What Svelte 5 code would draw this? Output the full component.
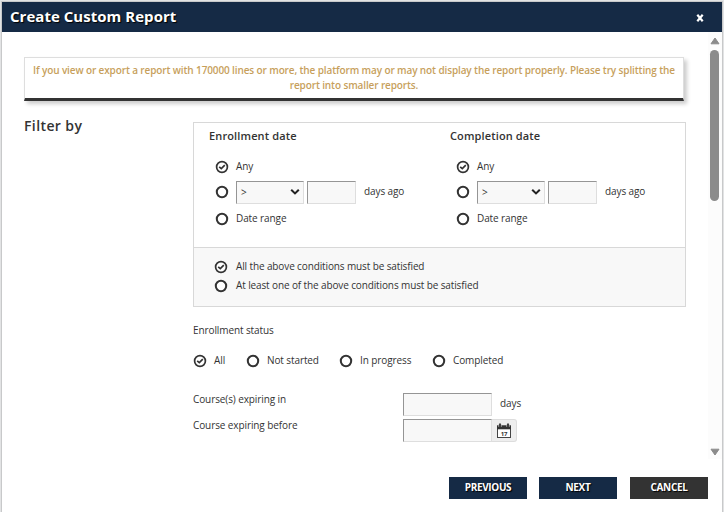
<script>
  const groups = ['Enrollment date', 'Completion date'];
  const statuses = [
    { label: 'All', width: 53 },
    { label: 'Not started', width: 93 },
    { label: 'In progress', width: 93 },
    { label: 'Completed', width: 80 }
  ];
</script>

{#snippet radio(checked)}
  <svg class="radio" width="14" height="14" viewBox="0 0 14 14">
    <circle cx="7" cy="7" r={checked ? 5.4 : 5.2} fill="#fff" stroke="#333" stroke-width={checked ? 1.7 : 2} />
    {#if checked}
      <path d="M4.2 6.9 6.3 8.7 9.8 5.2" fill="none" stroke="#333" stroke-width="1.7" />
    {/if}
  </svg>
{/snippet}

<div class="page">
  <div class="dialog">
    <header>
      <h1>Create Custom Report</h1>
      <svg class="close" width="8" height="8" viewBox="0 0 8 8"><path d="M1.3 .8 6.7 7.2M6.7 .8 1.3 7.2" stroke="#fff" stroke-width="2.2" /></svg>
    </header>

    <div class="body">
      <main>
        <div class="notice">
          <div>If you view or export a report with 170000 lines or more, the platform may or may not display the report properly. Please try splitting the</div>
          <div>report into smaller reports.</div>
        </div>
        <div class="filters">
          <h2>Filter by</h2>
          <div class="fields">
            <section class="box">
              <div class="dates">
                {#each groups as title}
                  <div class="group">
                    <h3>{title}</h3>
                    <div class="row any">{@render radio(true)}<span class="lab">Any</span></div>
                    <div class="row ago">
                      {@render radio(false)}
                      <div class="input select">
                        <span>&gt;</span>
                        <svg width="10" height="8" viewBox="0 0 10 8"><path d="M1.2 1.8 5 5.4 8.8 1.8" fill="none" stroke="#222" stroke-width="2.1" /></svg>
                      </div>
                      <div class="input num"></div>
                      <span class="unit">days ago</span>
                    </div>
                    <div class="row range">{@render radio(false)}<span class="lab">Date range</span></div>
                  </div>
                {/each}
              </div>
              <div class="conditions">
                <div class="row c1">{@render radio(true)}<span class="lab">All the above conditions must be satisfied</span></div>
                <div class="row c2">{@render radio(false)}<span class="lab">At least one of the above conditions must be satisfied</span></div>
              </div>
            </section>

            <div class="status-title">Enrollment status</div>
            <div class="statuses">
              {#each statuses as s, i}
                <div class="row" style:width="{s.width}px">{@render radio(i === 0)}<span class="lab">{s.label}</span></div>
              {/each}
            </div>

            <div class="expiry first">
              <span class="name">Course(s) expiring in</span>
              <div class="input wide"></div>
              <span class="unit">days</span>
            </div>
            <div class="expiry">
              <span class="name">Course expiring before</span>
              <div class="input wide"></div>
              <div class="cal">
                <svg width="16" height="16" viewBox="0 0 16 16">
                  <rect x="1.5" y="3" width="13" height="11.5" fill="#fff" stroke="#444" />
                  <path d="M1 2.5h14v3.8H1z" fill="#333" />
                  <path d="M4 1v3M12 1v3" stroke="#ccc" stroke-width="3" />
                  <path d="M4 .5v3.5M12 .5v3.5" stroke="#333" stroke-width="1.8" />
                  <text x="8" y="12.7" text-anchor="middle">17</text>
                </svg>
              </div>
            </div>
          </div>
        </div>
      </main>
      <div class="scroll">
        <svg width="10" height="8" viewBox="0 0 10 8"><path d="M5 1 9 6.8H1Z" fill="#8b8b8b" stroke="#8b8b8b" stroke-linejoin="round" /></svg>
        <div class="thumb"></div>
        <svg class="down" width="10" height="8" viewBox="0 0 10 8"><path d="M5 7 1 1.2H9Z" fill="#8b8b8b" stroke="#8b8b8b" stroke-linejoin="round" /></svg>
      </div>
    </div>

    <footer>
      <button>PREVIOUS</button>
      <button>NEXT</button>
      <button class="cancel">CANCEL</button>
    </footer>
  </div>
</div>

<style>
  .page { box-sizing: border-box; width: 724px; height: 512px; padding: 1px 1px 0; background: #e2e3e4; overflow: hidden; font: 10px/14px "Open Sans", sans-serif; letter-spacing: -.1px; color: #333; }
  .dialog { box-sizing: border-box; width: 722px; height: 511px; border: 1px solid #c8c9ca; border-bottom: 0; background: #fff; }
  header { display: flex; align-items: center; justify-content: space-between; height: 30px; padding: 0 18px 0 8px; background: #152a45; }
  h1, h2, h3 { margin: 0; white-space: nowrap; }
  h1 { font-size: 15px; line-height: 28px; padding-bottom: 2px; font-weight: 700; letter-spacing: .03px; color: #fff; text-shadow: 1px 1px 1px #000; }
  .close { margin-top: 2px; }
  .body { display: flex; height: 427px; }
  main { width: 706px; flex: none; }
  .notice { box-sizing: border-box; width: 660px; height: 44px; margin: 25px 0 0 22px; padding-top: 5px; border: 1px solid #dedede; border-bottom: 3px solid #333; box-shadow: 3px 3px 4px rgba(0,0,0,.2); text-align: center; font-weight: 600; line-height: 15px; letter-spacing: -.12px; color: #c79f5c; white-space: nowrap; }
  .filters { display: flex; margin: 21px 0 0 22px; }
  h2 { width: 169px; flex: none; margin-top: -5px; font-size: 14px; line-height: 18px; font-weight: 600; letter-spacing: .4px; }
  .fields { width: 493px; flex: none; }
  .box { box-sizing: border-box; height: 185px; border: 1px solid #d8d8d8; }
  .dates { display: flex; height: 124px; padding-left: 15px; border-bottom: 1px solid #d8d8d8; }
  .group { flex: none; width: 241px; }
  .group + .group { width: 234px; }
  h3 { margin-top: 5px; font-size: 11px; line-height: 16px; font-weight: 600; letter-spacing: .13px; }
  .row { display: flex; align-items: center; white-space: nowrap; }
  .radio { flex: none; }
  .lab { margin-left: 7px; padding-bottom: 2px; }
  .group .row { padding-left: 6px; }
  .any { height: 14px; margin-top: 16px; }
  .ago { height: 23px; margin-top: 7px; }
  .ago .radio { margin-bottom: 1px; }
  .range { height: 14px; margin-top: 8px; }
  .input { box-sizing: border-box; flex: none; height: 23px; border: 1px solid; border-color: #959595 #dedede #dedede #959595; background: #f8f8f8; }
  .select { display: flex; align-items: center; justify-content: space-between; width: 68px; margin-left: 7px; padding: 0 3px 1px 4px; }
  .num { width: 49px; margin-left: 3px; }
  .unit { margin-left: 8px; }
  .ago .unit { padding-bottom: 3px; }
  .conditions { height: 58px; padding-left: 20px; background: #f8f8f8; box-sizing: border-box; padding-top: 12px; }
  .conditions .lab { margin-left: 8px; letter-spacing: -.12px; }
  .c1 { height: 14px; }
  .c2 { height: 14px; margin-top: 5px; }
  .status-title { height: 14px; margin-top: 16px; }
  .statuses { display: flex; margin-top: 16px; height: 15px; }
  .expiry { display: flex; height: 23px; margin-top: 3px; }
  .expiry.first { margin-top: 25px; }
  .name { width: 210px; margin-top: -1px; }
  .expiry .unit { margin-top: 3px; }
  .wide { width: 89px; }
  .cal { display: flex; align-items: center; justify-content: center; box-sizing: border-box; width: 25px; height: 23px; background: #eee; border: 1px solid #ddd; border-left: 0; border-radius: 0 3px 3px 0; }
  .cal text { font: 700 6px "Open Sans", sans-serif; fill: #333; }
  .scroll { display: flex; flex-direction: column; align-items: center; box-sizing: border-box; width: 14px; height: 427px; padding: 5px 1px 3px 0; background: #fcfcfc; }
  .thumb { width: 9px; height: 151px; margin-top: 5px; border-radius: 5px; background: #8b8b8b; }
  .down { margin-top: auto; }
  footer { display: flex; justify-content: flex-end; padding: 18px 14px 0 0; }
  button { width: 78px; height: 22px; margin: 0 0 0 12px; padding: 0 0 1px; border: 0; background: #152a45; color: #fff; font: 700 10px/21px "Open Sans", sans-serif; letter-spacing: -.35px; text-shadow: 1px 1px 1px #000; }
  .cancel { margin-left: 13px; background: #333; }
</style>
